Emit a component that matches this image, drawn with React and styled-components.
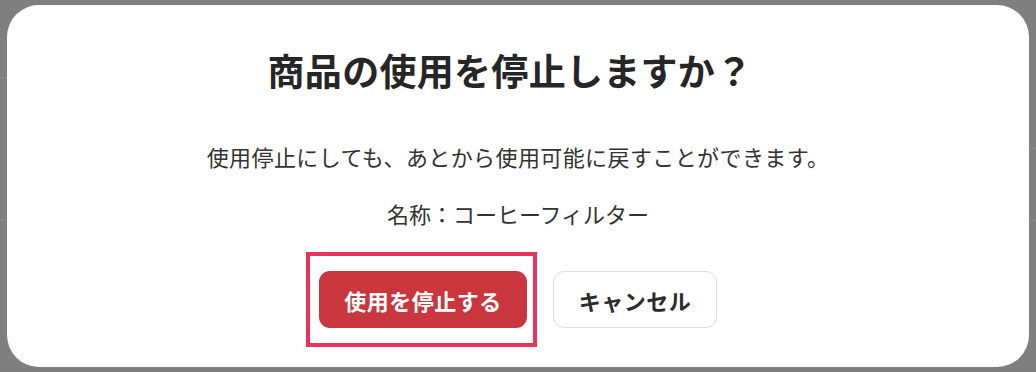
import React from "react";
import styled, { createGlobalStyle } from "styled-components";

const Global = createGlobalStyle`
  html, body { margin: 0; padding: 0; }
  body {
    width: 1036px;
    height: 372px;
    overflow: hidden;
    background: #7f7f7f;
    font-family: "Noto Sans CJK JP", "Noto Sans", sans-serif;
  }
`;

const Backdrop = styled.div`
  width: 1036px;
  height: 372px;
  box-sizing: border-box;
  padding: 5px 7px;
  background:
    linear-gradient(#8a8a8a, #8a8a8a) 0 77px / 20px 1px no-repeat,
    linear-gradient(#8a8a8a, #8a8a8a) 0 220px / 20px 1px no-repeat,
    linear-gradient(#8a8a8a, #8a8a8a) 1020px 148px / 16px 1px no-repeat,
    linear-gradient(#8a8a8a, #8a8a8a) 1020px 220px / 16px 1px no-repeat,
    #7f7f7f;
`;

const Modal = styled.div`
  width: 1022px;
  height: 362px;
  box-sizing: border-box;
  background: #ffffff;
  border-radius: 32px;
  padding: 47px 0 0;
  display: flex;
  flex-direction: column;
  align-items: center;
`;

const Title = styled.h2`
  margin: 0;
  padding-right: 16px;
  font-size: 37px;
  line-height: 37px;
  font-weight: 700;
  color: #262626;
  letter-spacing: 0.3px;
`;

const Text = styled.p`
  margin: ${(p) => p.$top}px 0 0;
  font-size: 22px;
  line-height: 22px;
  font-weight: 400;
  color: #333333;
  letter-spacing: ${(p) => p.$ls || 0}px;
`;

const Actions = styled.div`
  margin-top: 47px;
  display: flex;
  gap: 26px;
  align-items: center;
`;

const Highlight = styled.div`
  position: relative;
`;

const Marker = styled.span`
  position: absolute;
  left: -13px;
  top: -19px;
  width: 231px;
  height: 95px;
  box-sizing: border-box;
  border: 4px solid #e8335d;
  pointer-events: none;
`;

const Button = styled.button`
  height: 57px;
  width: ${(p) => p.$w}px;
  box-sizing: border-box;
  border-radius: 11px;
  font-family: inherit;
  font-size: 22px;
  font-weight: 700;
  letter-spacing: 0.5px;
  cursor: pointer;
  border: ${(p) => (p.$primary ? "none" : "1px solid #dedede")};
  background: ${(p) => (p.$primary ? "#c9363d" : "#ffffff")};
  color: ${(p) => (p.$primary ? "#ffffff" : "#2b2b2b")};
  display: flex;
  align-items: center;
  justify-content: center;
  padding: 0;
`;

export default function App() {
  return (
    <>
      <Global />
      <Backdrop>
        <Modal>
          <Title>商品の使用を停止しますか？</Title>
          <Text $top={56} $ls={0.4}>使用停止にしても、あとから使用可能に戻すことができます。</Text>
          <Text $top={35}>名称：コーヒーフィルター</Text>
          <Actions>
            <Highlight>
              <Button $primary $w={208}>使用を停止する</Button>
              <Marker />
            </Highlight>
            <Button $w={164}>キャンセル</Button>
          </Actions>
        </Modal>
      </Backdrop>
    </>
  );
}
